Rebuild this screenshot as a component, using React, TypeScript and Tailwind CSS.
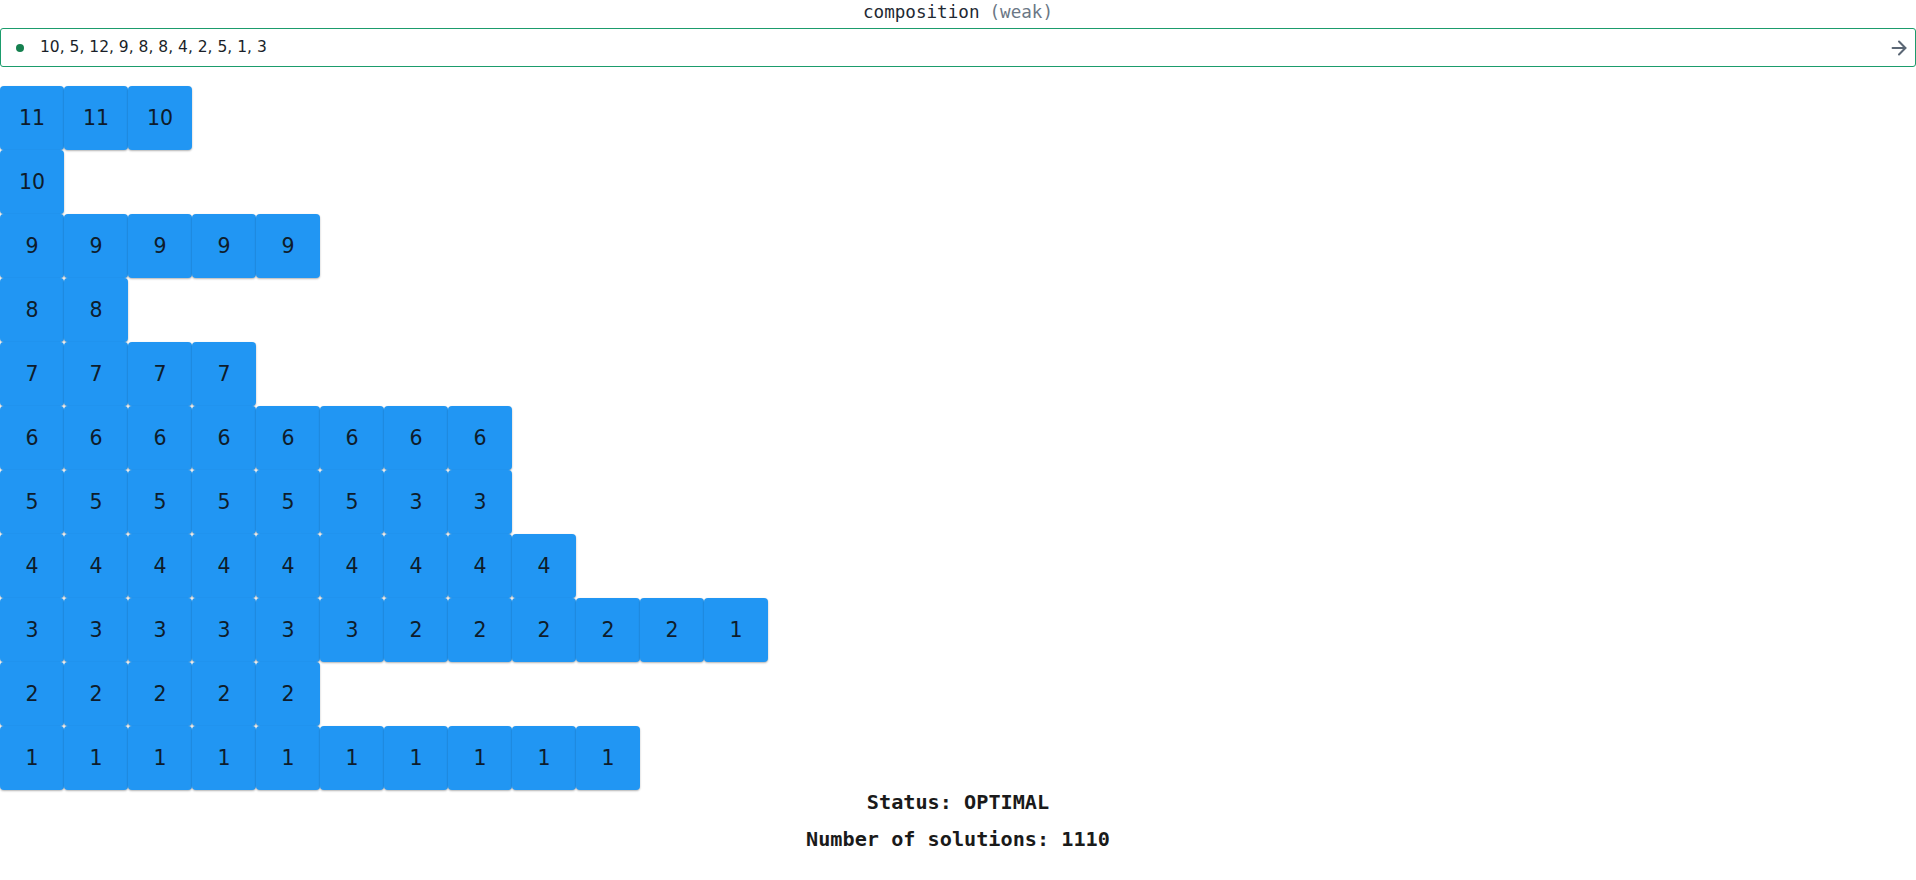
import React from "react";
import { ArrowRight } from "lucide-react";

const rows: number[][] = [
  [11, 11, 10],
  [10],
  [9, 9, 9, 9, 9],
  [8, 8],
  [7, 7, 7, 7],
  [6, 6, 6, 6, 6, 6, 6, 6],
  [5, 5, 5, 5, 5, 5, 3, 3],
  [4, 4, 4, 4, 4, 4, 4, 4, 4],
  [3, 3, 3, 3, 3, 3, 2, 2, 2, 2, 2, 1],
  [2, 2, 2, 2, 2],
  [1, 1, 1, 1, 1, 1, 1, 1, 1, 1],
];

export default function App() {
  return (
    <div className="w-[1916px] h-[880px] bg-white overflow-hidden">
      <div className="h-[25px] flex items-center justify-center font-['DejaVu_Sans_Mono',monospace] text-[17.6px] text-[#1f2933]">
        <span>composition</span>
        <span className="ml-[10px] text-[#6b7785]">(weak)</span>
      </div>
      <div className="mt-[3px] h-[39px] border border-[#1b9c6c] rounded-[3px] flex items-center pl-[15px] pr-[5px]">
        <span className="w-[8px] h-[8px] rounded-full bg-[#15804f]" />
        <span className="ml-[16px] flex-1 font-['DejaVu_Sans',sans-serif] text-[15.5px] text-[#1a1f29]">
          10, 5, 12, 9, 8, 8, 4, 2, 5, 1, 3
        </span>
        <ArrowRight className="w-[22px] h-[22px] text-[#5b6775]" strokeWidth={2.2} />
      </div>
      <div className="mt-[19px] flex flex-col">
        {rows.map((row, i) => (
          <div key={i} className="flex h-[64px]">
            {row.map((v, j) => (
              <div
                key={j}
                className="w-[64px] h-[64px] rounded-[4px] bg-[#2196f3] shadow-[0_1px_2px_rgba(0,0,0,0.3)] flex items-center justify-center font-['DejaVu_Sans',sans-serif] text-[20.5px] text-[#0e1c2b]"
              >
                {v}
              </div>
            ))}
          </div>
        ))}
      </div>
      <div className="flex flex-col items-center font-['DejaVu_Sans_Mono',monospace] font-bold text-[20.2px] text-[#1a1a1a]">
        <div className="h-[24px] leading-[24px]">Status: OPTIMAL</div>
        <div className="mt-[13px] h-[24px] leading-[24px]">Number of solutions: 1110</div>
      </div>
    </div>
  );
}
